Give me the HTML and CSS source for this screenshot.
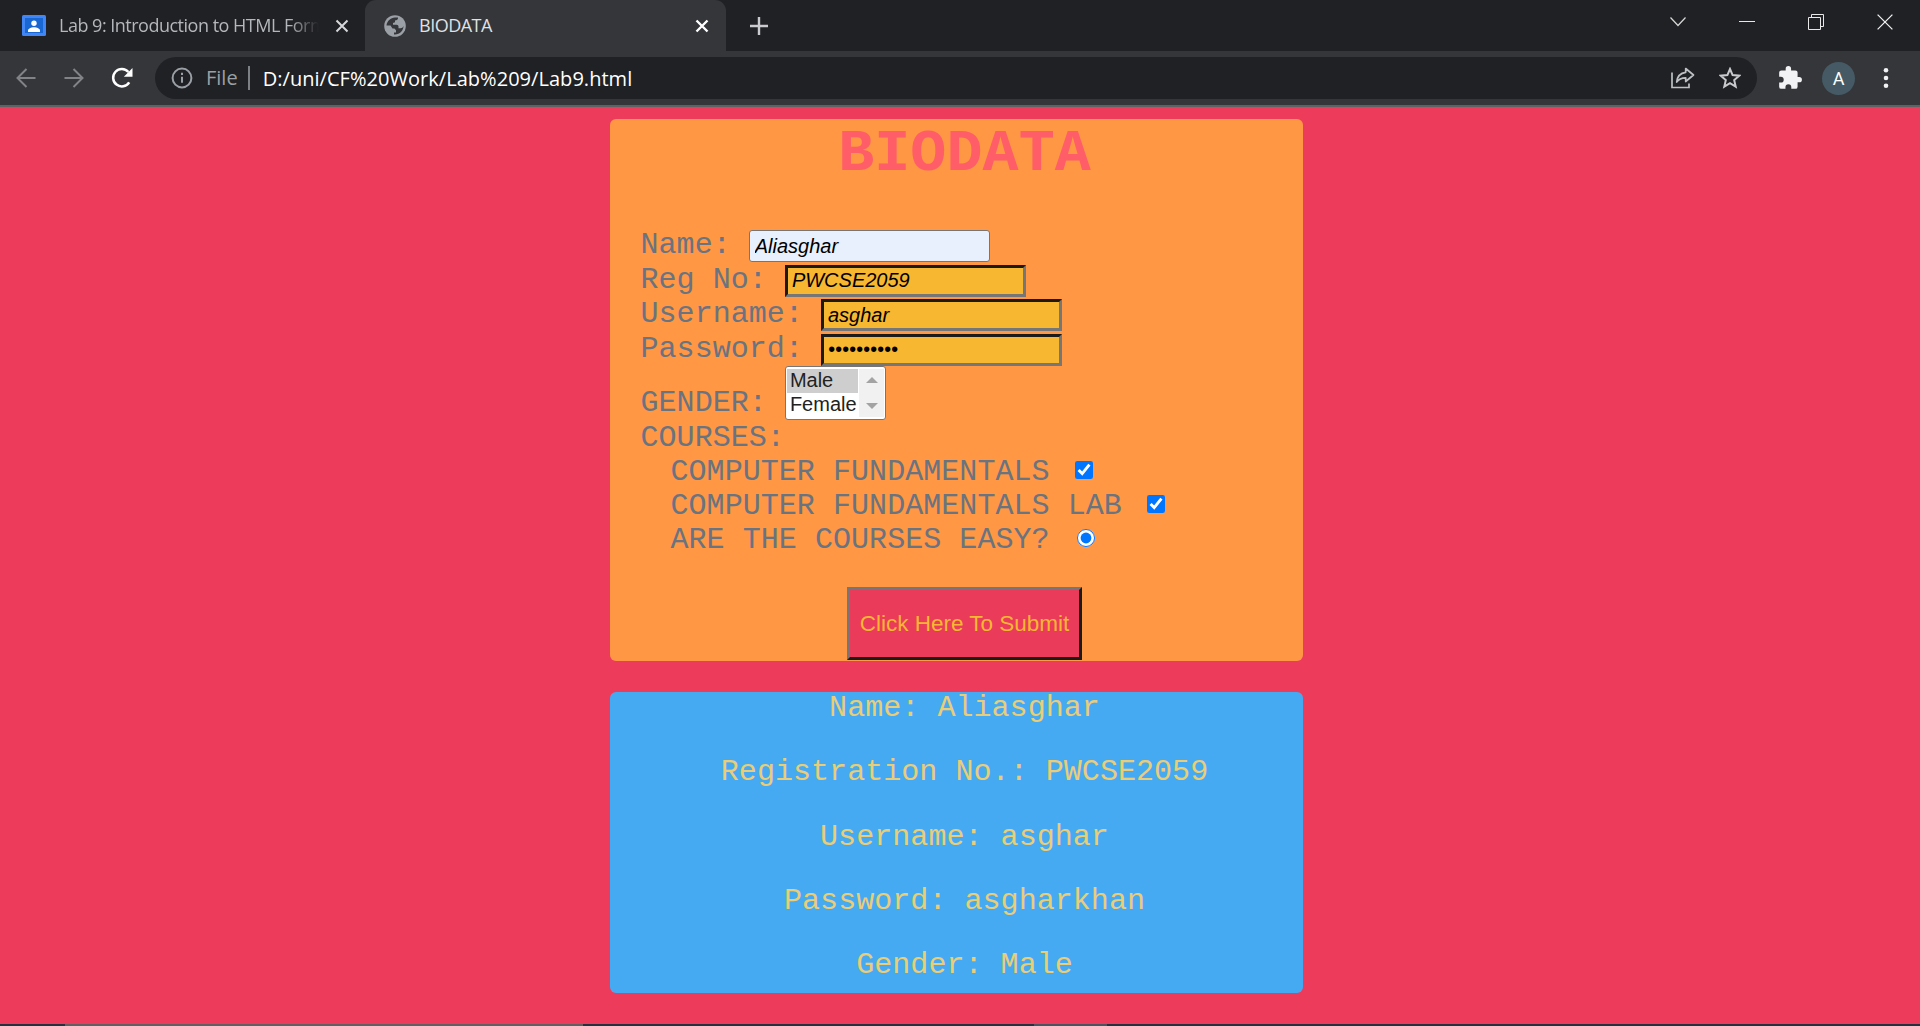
FILE: index.html
```
<!DOCTYPE html>
<html lang="en">
<head>
<meta charset="utf-8">
<title>BIODATA</title>
<link rel="stylesheet" href="styles.css">
</head>
<body>
<header class="browser">
  <div class="tabs">
    <div class="tab">
      <svg class="favicon" width="24" height="21" viewBox="0 0 24 21"><rect width="24" height="21" rx="1.5" fill="#4285f4"/><rect x="3" y="3" width="18" height="15" fill="#1967d2"/><circle cx="12" cy="8.2" r="2.7" fill="#fff"/><path d="M6 17v-1.5c0-2 3-3.3 6-3.3s6 1.300 6 3.300V17z" fill="#fff"/></svg>
      <span class="tab-title faded">Lab 9: Introduction to HTML Form</span>
      <svg class="close" width="14" height="14" viewBox="0 0 14 14"><path d="M1.500 1.500l11 11m0-11l-11 11" stroke="#d5d7da" stroke-width="2"/></svg>
    </div>
    <div class="tab active">
      <svg class="globe" width="22" height="22" viewBox="0 0 22 22"><circle cx="11" cy="11" r="10.800" fill="#9aa0a6"/><path fill="#35363a" d="M2.500 10.500C3 6 6.500 2.700 11 2.500h3c.3 1.600-.6 2.500-2 2.700l-1 .2v1.800L9 8v1.700h3.500c1.300 0 2 .8 2 2v1.500h2c1.500 0 2.300-.7 3-2.200-.1 4.700-3.700 8.500-8.500 8.500l-1-.1v-1.900h2v-2.300l-1.600-1.700H8.500L6.500 10.500z"/><path d="M2.800 12.500c.7 3.200 2.800 5.600 6 6.600" fill="none" stroke="#9aa0a6" stroke-width="1"/></svg>
      <span class="tab-title">BIODATA</span>
      <svg class="close" width="14" height="14" viewBox="0 0 14 14"><path d="M1.500 1.500l11 11m0-11l-11 11" stroke="#fff" stroke-width="2.400"/></svg>
    </div>
    <svg class="new-tab" width="18" height="18" viewBox="0 0 18 18"><path d="M9 0v18M0 9h18" stroke="#c9cbce" stroke-width="2.400"/></svg>
    <div class="window-controls">
      <svg width="16" height="16" viewBox="0 0 16 16"><path d="M.5 3.500L8 11.500l7.500-8" fill="none" stroke="#d8d8d8" stroke-width="1.200"/></svg>
      <svg width="16" height="16" viewBox="0 0 16 16"><path d="M0 7.500h16" stroke="#e8e8e8" stroke-width="1"/></svg>
      <svg width="16" height="16" viewBox="0 0 16 16"><path d="M.5 3.500h12v12H.5zM3.500 3.500v-3h12v12h-3" fill="none" stroke="#e8e8e8" stroke-width="1"/></svg>
      <svg width="16" height="16" viewBox="0 0 16 16"><path d="M.6.6l14.800 14.800m0-14.800L.6 15.400" stroke="#f0f0f0" stroke-width="1.300"/></svg>
    </div>
  </div>
  <div class="toolbar">
    <svg class="nav" width="20" height="20" viewBox="0 0 20 20"><path d="M19.500 10H2M10.500 1L1.500 10l9 9" fill="none" stroke="#828387" stroke-width="2"/></svg>
    <svg class="nav" width="20" height="20" viewBox="0 0 20 20"><path d="M.5 10H18M9.500 1l9 9-9 9" fill="none" stroke="#828387" stroke-width="2"/></svg>
    <svg class="nav reload" width="22" height="22" viewBox="0 0 22 22"><path d="M18.200 15.400A8.700 8.700 0 1 1 17.400 5" fill="none" stroke="#fff" stroke-width="2.500"/><path d="M21.500 1v8.700h-8.700z" fill="#fff"/></svg>
    <div class="address">
      <svg width="22" height="22" viewBox="0 0 22 22"><circle cx="11" cy="11" r="9.400" fill="none" stroke="#9aa0a6" stroke-width="2"/><path d="M11 9.800v6M11 5.800v2.300" stroke="#9aa0a6" stroke-width="2"/></svg>
      <span class="scheme">File</span>
      <span class="url">D:/uni/CF%20Work/Lab%209/Lab9.html</span>
      <svg class="share" width="24" height="22" viewBox="0 0 24 22"><path d="M1 5.500V20.500h17v-4" fill="none" stroke="#bdc1c6" stroke-width="1.700"/><path d="M14.700 1.500l7.800 6.500-7.800 6.500v-3.700c-4.200 0-7 1.100-9 4.200.5-5.200 3.500-9 9-9.700z" fill="none" stroke="#bdc1c6" stroke-width="1.700" stroke-linejoin="round"/></svg>
      <svg class="star" width="22" height="22" viewBox="0 0 22 22"><path d="M11 2l2.600 6.100 6.600.6-5 4.400 1.500 6.500-5.700-3.400-5.700 3.400 1.500-6.500-5-4.400 6.600-.6z" fill="none" stroke="#c8cacd" stroke-width="2"/></svg>
    </div>
    <svg class="puzzle" width="26" height="26" viewBox="0 0 24 24"><path fill="#f1f3f4" d="M20.500 11H19V7a2 2 0 0 0-2-2h-4V3.500a2.500 2.500 0 0 0-5 0V5H4a2 2 0 0 0-2 2v3.800h1.500a2.700 2.700 0 0 1 0 5.400H2V20a2 2 0 0 0 2 2h3.800v-1.500a2.700 2.700 0 0 1 5.400 0V22H17a2 2 0 0 0 2-2v-4h1.500a2.500 2.500 0 0 0 0-5z"/></svg>
    <span class="avatar">A</span>
    <svg class="more" width="6" height="22" viewBox="0 0 6 22"><g fill="#f1f3f4"><circle cx="3" cy="3.300" r="2.300"/><circle cx="3" cy="11" r="2.300"/><circle cx="3" cy="18.700" r="2.300"/></g></svg>
  </div>
</header>
<main class="page">
  <form class="card form-card">
    <h1>BIODATA</h1>
    <div class="fields">
      <label class="row">Name:<input class="autofilled" type="text" value="Aliasghar"></label>
      <label class="row">Reg No:<input type="text" value="PWCSE2059"></label>
      <label class="row">Username:<input type="text" value="asghar"></label>
      <label class="row">Password:<input type="password" value="asgharkhan"></label>
      <div class="row gender">GENDER:
        <div class="listbox">
          <div class="options"><span class="selected">Male</span><span>Female</span></div>
          <div class="scroll"><i class="up"></i><i class="down"></i></div>
        </div>
      </div>
      <div class="line">COURSES:</div>
      <label class="line course">COMPUTER FUNDAMENTALS<input type="checkbox" checked></label>
      <label class="line course">COMPUTER FUNDAMENTALS LAB<input type="checkbox" checked></label>
      <label class="line course">ARE THE COURSES EASY?<input type="radio" checked></label>
    </div>
    <button type="button">Click Here To Submit</button>
  </form>
  <section class="card result">
    <p>Name: Aliasghar</p>
    <p>Registration No.: PWCSE2059</p>
    <p>Username: asghar</p>
    <p>Password: asgharkhan</p>
    <p>Gender: Male</p>
  </section>
</main>
<footer class="taskbar"><span class="search"></span><span class="app"></span></footer>
</body>
</html>
```
FILE: styles.css
```
* { box-sizing: border-box; }
body {
  margin: 0;
  height: 1026px;
  overflow: hidden;
  display: flex;
  flex-direction: column;
  background: #ed3b5b;
  font-family: "Liberation Mono", monospace;
}
svg { flex: none; display: block; }

/* Browser frame */
.browser {
  height: 107px;
  flex: none;
  background: #35363a;
  border-bottom: 2px solid #5c6365;
  font-family: "Open Sans", "Noto Sans", sans-serif;
}
.tabs { display: flex; height: 51px; background: #202124; }
.tab { display: flex; align-items: center; width: 365px; padding: 0 16px 0 22px; }
.tab.active {
  width: 361px;
  padding: 0 17px 0 19px;
  background: #35363a;
  border-radius: 11px 11px 0 0;
}
.tab-title {
  flex: 1;
  margin-left: 13px;
  white-space: nowrap;
  font-size: 18px;
  line-height: 51px;
  letter-spacing: -0.5px;
  color: #dfe1e5;
}
.faded {
  margin-right: 8px;
  color: #b4b7bb;
  mask-image: linear-gradient(90deg, #000 86%, transparent 97%);
}
.new-tab { margin: 17px 0 0 24px; }
.window-controls { display: flex; gap: 53px; margin: 14px 27px 0 auto; }
.toolbar { display: flex; align-items: center; height: 54px; padding: 0 0 0 16px; }
.nav { margin-right: 28px; }
.reload { margin: 0 22px 0 -1px; }
.address {
  display: flex;
  align-items: center;
  width: 1602px;
  height: 42px;
  padding: 0 16px 0 16px;
  border-radius: 21px;
  background: #202124;
  font-size: 20px;
}
.scheme {
  height: 24px;
  line-height: 23px;
  margin-left: 13px;
  padding-right: 10px;
  border-right: 2px solid #7d8186;
  color: #9aa0a6;
}
.url { margin-left: 13px; letter-spacing: 0.04px; color: #fff; }
.share { margin-left: auto; margin-right: 24px; }
.puzzle { margin-left: 20px; }
.avatar {
  width: 33px;
  height: 33px;
  margin: 0 28px 0 19px;
  border-radius: 50%;
  background: #455a64;
  color: #fff;
  font: 18px/33px Roboto, sans-serif;
  text-align: center;
}

/* Page */
.page { flex: 1; padding: 12px 0 0 610px; }
.card { width: 693px; border-radius: 6px; font-size: 30px; letter-spacing: 0.05px; }
.form-card {
  display: flex;
  flex-direction: column;
  height: 542px;
  margin-bottom: 31px;
  background: #ff9744;
  color: #6a7380;
}
h1 {
  margin: 0;
  padding-left: 16px;
  height: 109px;
  text-align: center;
  font-size: 60px;
  line-height: 70px;
  letter-spacing: 0.1px;
  color: #ff5d68;
}
.fields { padding-left: 30.500px; height: 359px; }
.row { display: flex; height: 34.500px; line-height: 34.500px; }
.row input {
  width: 241px;
  height: 32px;
  margin: 2px 0 0 18px;
  padding: 1px 4px;
  border: 3px solid;
  border-color: #1b1b1b #767676 #767676 #1b1b1b;
  background: #f7b731;
  color: #000;
  font: italic 20px "Liberation Sans", sans-serif;
}
.row input.autofilled {
  padding: 1px 5px;
  border: 1px solid #767676;
  border-radius: 3px;
  background: #e8f0fe;
}
.row.gender { height: 54.500px; align-items: flex-end; }
.listbox {
  display: flex;
  width: 101px;
  height: 54px;
  margin: 0 0 1px 18px;
  padding: 2px 1px;
  border: 1px solid #767676;
  border-radius: 3px;
  background: #fff;
  color: #222;
  font: 20px/22px "Liberation Sans", sans-serif;
  letter-spacing: 0;
}
.options { display: flex; flex-direction: column; width: 73px; }
.options span { height: 25px; padding-left: 3px; }
.selected { background: #cecece; }
.scroll {
  display: flex;
  flex-direction: column;
  align-items: center;
  justify-content: space-between;
  width: 25px;
  margin-left: 1px;
  padding: 8px 0;
  background: #f1f1f1;
}
.up, .down { border: 6px solid transparent; border-top: 0; border-bottom: 6px solid #a3a3a3; }
.down { border-top: 6px solid #a3a3a3; border-bottom: 0; }
.line { display: flex; height: 34.200px; line-height: 34.200px; }
.course { padding-left: 30px; }
.course input { width: 18px; height: 18px; margin: 6px 0 0 25px; }
.course input[type="radio"] { margin-left: 27px; }
button {
  width: 235px;
  height: 73px;
  margin-left: 237px;
  padding: 0;
  border: 3px solid;
  border-color: #767676 #1b1b1b #1b1b1b #767676;
  background: #eb3b5a;
  color: #f7b731;
  font: 22.500px "Liberation Sans", sans-serif;
  white-space: nowrap;
}
.result {
  height: 301px;
  padding-left: 16px;
  background: #45aaf2;
  color: #e9cd78;
  text-align: center;
}
.result p { margin: 0 0 30.300px; line-height: 33px; }
.result p + p { line-height: 34px; }

/* Top edge of the desktop taskbar */
.taskbar { display: flex; flex: none; height: 2px; padding-left: 65px; background: #20323f; }
.search { width: 518px; background: #5f6062; }
.app { width: 73px; margin-left: 451px; background: #46555f; }
```
